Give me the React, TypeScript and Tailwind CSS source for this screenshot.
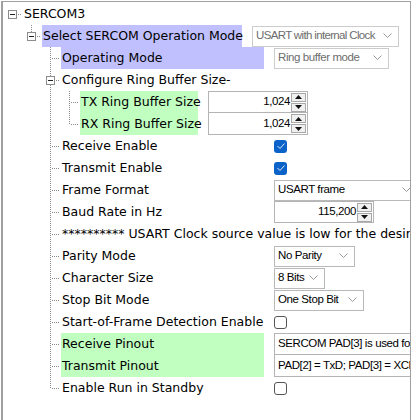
import React from "react";

type G = "none" | "line" | "tee" | "elbow" | "root" | "boxElbow" | "boxTee";

function Guide({ kind }: { kind: G }) {
	const dot = { stroke: "#8a8a8a", strokeWidth: 1, strokeDasharray: "1 1" };
	const box = kind === "root" || kind === "boxElbow" || kind === "boxTee";
	return (
		<svg width="19" height="22" className="shrink-0 block">
			{kind === "line" && <line x1="9.5" y1="0" x2="9.5" y2="22" {...dot} />}
			{kind === "tee" && (
				<>
					<line x1="9.5" y1="0" x2="9.5" y2="22" {...dot} />
					<line x1="11" y1="11.5" x2="19" y2="11.5" {...dot} />
				</>
			)}
			{kind === "elbow" && (
				<>
					<line x1="9.5" y1="0" x2="9.5" y2="11" {...dot} />
					<line x1="11" y1="11.5" x2="19" y2="11.5" {...dot} />
				</>
			)}
			{(kind === "boxElbow" || kind === "boxTee") && (
				<line x1="9.5" y1="0" x2="9.5" y2="7" {...dot} />
			)}
			{kind === "boxTee" && <line x1="9.5" y1="16" x2="9.5" y2="22" {...dot} />}
			{box && (
				<>
					<rect x="5.5" y="7.5" width="8" height="8" fill="#fff" stroke="#8c8c8c" />
					<line x1="7" y1="11.5" x2="12" y2="11.5" stroke="#222" />
					<line x1="15" y1="11.5" x2="19" y2="11.5" {...dot} />
				</>
			)}
		</svg>
	);
}

function Chevron() {
	return (
		<svg width="9" height="6" className="shrink-0">
			<polyline points="0.5,0.5 4.5,4.5 8.5,0.5" fill="none" stroke="#9a9a9a" />
		</svg>
	);
}

function Dropdown({ value, width, disabled, tight }: { value: string; width: string; disabled?: boolean; tight?: boolean }) {
	return (
		<div
			className={`${width} h-[21px] shrink-0 flex items-center justify-between pl-[3px] pr-[6px] bg-white border ${
				disabled ? "border-[#cccccc] text-[#6d6d6d]" : "border-[#b9b9b9] text-black"
			}`}
		>
			<span className={`whitespace-nowrap ${tight ? "tracking-[-0.65px]" : ""}`}>{value}</span>
			<Chevron />
		</div>
	);
}

function Spin({ value, border }: { value: string; border: string }) {
	return (
		<div className={`w-[100px] h-[22px] shrink-0 flex items-center justify-end bg-white border-[#b4b4b4] ${border}`}>
			<span className="pr-px">{value}</span>
			<div className="flex flex-col w-[15px] h-[19px] mr-px gap-px">
				<div className="flex-1 flex items-center justify-center bg-[#f0f0f0] border border-[#a8a8a8]">
					<svg width="7" height="4">
						<polygon points="0,4 3.5,0 7,4" fill="#111" />
					</svg>
				</div>
				<div className="flex-1 flex items-center justify-center bg-[#f0f0f0] border border-[#a8a8a8]">
					<svg width="7" height="4">
						<polygon points="0,0 3.5,4 7,0" fill="#111" />
					</svg>
				</div>
			</div>
		</div>
	);
}

function Check({ on }: { on?: boolean }) {
	return on ? (
		<div className="w-[13px] h-[13px] rounded-[3px] bg-[#0b63c9] flex items-center justify-center">
			<svg width="8" height="6">
				<polyline points="0.5,3 3,5.5 7.5,0.5" fill="none" stroke="#dfe9f7" strokeWidth="1" />
			</svg>
		</div>
	) : (
		<div className="w-[13px] h-[13px] rounded-[3px] bg-white border border-[#555]" />
	);
}

function Text({ value, border }: { value: string; border: string }) {
	return (
		<div className={`w-[160px] h-[22px] shrink-0 flex items-center pl-[3px] bg-white border-[#b4b4b4] whitespace-nowrap ${border}`}>
			{value}
		</div>
	);
}

type Row = {
	guides: G[];
	label: string;
	bg?: string;
	w?: string;
	control?: React.ReactNode;
};

const L2: G[] = ["none", "none", "tee"];

const rows: Row[] = [
	{ guides: ["root"], label: "SERCOM3" },
	{
		guides: ["none", "boxElbow"],
		label: "Select SERCOM Operation Mode",
		bg: "bg-[#c0c0ff]",
		w: "w-[200px]",
		control: <Dropdown value="USART with internal Clock" width="w-[147px]" disabled tight />,
	},
	{
		guides: L2,
		label: "Operating Mode",
		bg: "bg-[#c0c0ff]",
		w: "w-[203px]",
		control: <Dropdown value="Ring buffer mode" width="w-[115px]" disabled />,
	},
	{ guides: ["none", "none", "boxTee"], label: "Configure Ring Buffer Size-" },
	{
		guides: ["none", "none", "line", "tee"],
		label: "TX Ring Buffer Size",
		bg: "bg-[#c0ffc0]",
		w: "w-[118px]",
		control: <Spin value="1,024" border="border" />,
	},
	{
		guides: ["none", "none", "line", "elbow"],
		label: "RX Ring Buffer Size",
		bg: "bg-[#c0ffc0]",
		w: "w-[118px]",
		control: <Spin value="1,024" border="border-x border-b" />,
	},
	{ guides: L2, label: "Receive Enable", w: "w-[203px]", control: <Check on /> },
	{ guides: L2, label: "Transmit Enable", w: "w-[203px]", control: <Check on /> },
	{ guides: L2, label: "Frame Format", w: "w-[203px]", control: <Dropdown value="USART frame" width="w-[144px]" /> },
	{ guides: L2, label: "Baud Rate in Hz", w: "w-[203px]", control: <Spin value="115,200" border="border" /> },
	{ guides: L2, label: "********** USART Clock source value is low for the desired baud rate **********" },
	{ guides: L2, label: "Parity Mode", w: "w-[203px]", control: <Dropdown value="No Parity" width="w-[81px]" /> },
	{ guides: L2, label: "Character Size", w: "w-[203px]", control: <Dropdown value="8 Bits" width="w-[51px]" /> },
	{ guides: L2, label: "Stop Bit Mode", w: "w-[203px]", control: <Dropdown value="One Stop Bit" width="w-[90px]" /> },
	{ guides: L2, label: "Start-of-Frame Detection Enable", w: "w-[203px]", control: <Check /> },
	{
		guides: L2,
		label: "Receive Pinout",
		bg: "bg-[#c0ffc0]",
		w: "w-[203px]",
		control: <Text value="SERCOM PAD[3] is used for data reception" border="border" />,
	},
	{
		guides: L2,
		label: "Transmit Pinout",
		bg: "bg-[#c0ffc0]",
		w: "w-[203px]",
		control: <Text value="PAD[2] = TxD; PAD[3] = XCK" border="border-x border-b" />,
	},
	{ guides: ["none", "none", "elbow"], label: "Enable Run in Standby", w: "w-[203px]", control: <Check /> },
];

export default function App() {
	return (
		<div className="w-[413px] h-[420px] bg-white overflow-hidden pt-px pl-px">
			<div className="w-[410px] h-[419px] border-l-2 border-t border-r border-[#a0a0a0] overflow-hidden pt-px">
				{rows.map((r, i) => (
					<div key={i} className="flex h-[22px] items-center">
						{r.guides.map((g, j) => (
							<Guide key={j} kind={g} />
						))}
						<div
							className={`${r.w ?? ""} ${r.bg ?? ""} ${i === 0 ? "ml-[2px]" : "ml-px pl-px"} shrink-0 h-full leading-[22px] whitespace-nowrap text-black text-[12.5px] [font-family:DejaVu_Sans,Verdana,sans-serif]`}
						>
							{r.label}
						</div>
						{r.control && (
							<div className="ml-[10px] flex items-center shrink-0 text-[11.5px] tracking-[-0.4px] [font-family:Liberation_Sans,Arial,sans-serif]">
								{r.control}
							</div>
						)}
					</div>
				))}
			</div>
		</div>
	);
}
